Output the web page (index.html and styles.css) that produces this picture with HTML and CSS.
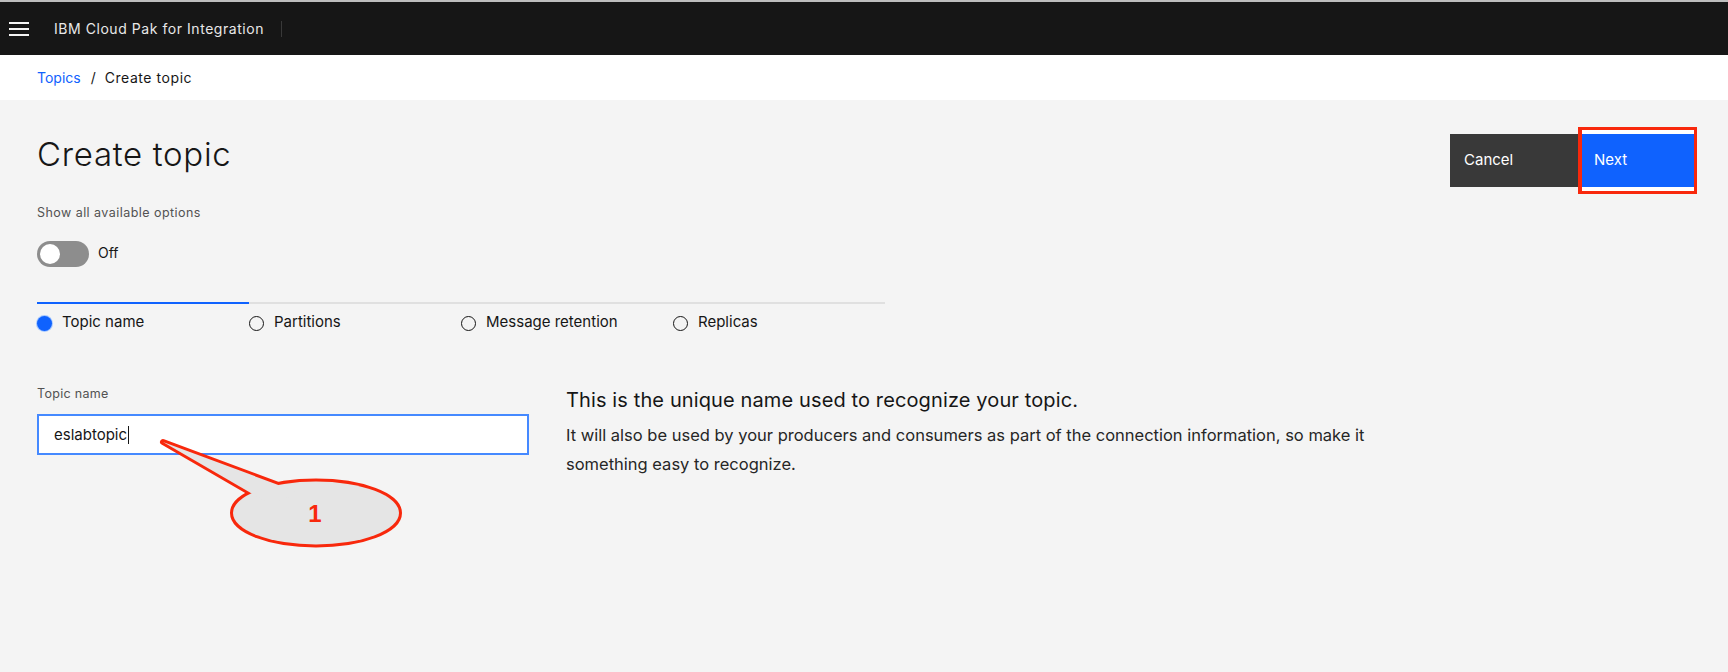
FILE: index.html
```html
<!DOCTYPE html>
<html lang="en">
<head>
<meta charset="utf-8">
<title>Create topic</title>
<link rel="stylesheet" href="styles.css">
</head>
<body>
<header class="shell">
  <span class="menu" aria-label="Menu">
    <svg width="20" height="14" viewBox="0 0 20 14"><rect x="0" y="0" width="20" height="2" fill="#f4f4f4"/><rect x="0" y="6" width="20" height="2" fill="#f4f4f4"/><rect x="0" y="12" width="20" height="2" fill="#f4f4f4"/></svg>
  </span>
  <span class="product">IBM Cloud Pak for Integration</span>
  <span class="divider"></span>
</header>
<nav class="crumbs">
  <a class="crumb-link" href="#">Topics</a>
  <span class="sep">/</span>
  <span class="crumb-current">Create topic</span>
</nav>
<main class="page">
  <div class="page-head">
    <div class="head-left">
      <h1 class="title">Create topic</h1>
      <div class="toggle-label">Show all available options</div>
      <div class="toggle">
        <span class="track"><span class="knob"></span></span>
        <span class="toggle-text">Off</span>
      </div>
    </div>
    <div class="actions">
      <button class="btn secondary">Cancel</button>
      <span class="annot"><button class="btn primary">Next</button></span>
    </div>
  </div>
  <ol class="progress">
    <li class="step current"><span class="radio"></span><span class="step-label">Topic name</span></li>
    <li class="step"><span class="radio"></span><span class="step-label">Partitions</span></li>
    <li class="step"><span class="radio"></span><span class="step-label">Message retention</span></li>
    <li class="step"><span class="radio"></span><span class="step-label">Replicas</span></li>
  </ol>
  <div class="form-row">
    <div class="field">
      <label class="field-label">Topic name</label>
      <div class="input">eslabtopic<span class="caret"></span></div>
    </div>
    <div class="help">
      <h2 class="help-title">This is the unique name used to recognize your topic.</h2>
      <p class="help-text">It will also be used by your producers and consumers as part of the connection information, so make it something easy to recognize.</p>
    </div>
  </div>
</main>
<svg class="callout" width="1728" height="672" viewBox="0 0 1728 672">
  <g fill="none" stroke="#f8280c" stroke-width="6" stroke-linejoin="round">
    <ellipse cx="316" cy="513" rx="83" ry="31.5"/>
    <polygon points="163,442 300,493 270,504"/>
  </g>
  <g fill="#e5e5e5">
    <ellipse cx="316" cy="513" rx="83" ry="31.5"/>
    <polygon points="163,442 300,493 270,504"/>
  </g>
  <text x="315" y="522" text-anchor="middle" class="callout-num">1</text>
</svg>
</body>
</html>
```
FILE: styles.css
```css
* { box-sizing: border-box; }
html, body { margin: 0; padding: 0; }
body {
  position: relative;
  width: 1728px;
  height: 672px;
  overflow: hidden;
  background: #f4f4f4;
  font-family: Inter, Roboto, "Liberation Sans", sans-serif;
  color: #161616;
}
.shell {
  height: 55px;
  border-top: 2px solid #bdbdbd;
  background: #161616;
  display: flex;
  align-items: center;
}
.menu {
  display: flex;
  width: 54px;
  padding-left: 9px;
}
.menu svg { display: block; }
.product {
  color: #e8e8e8;
  font-size: 14px;
  letter-spacing: 0.55px;
}
.divider {
  width: 1px;
  height: 16px;
  background: #393939;
  margin-left: 17px;
}
.crumbs {
  height: 45px;
  background: #ffffff;
  display: flex;
  align-items: center;
  padding-left: 37px;
  font-size: 14px;
}
.crumb-link { color: #0f62fe; text-decoration: none; }
.sep { margin: 0 9px 0 10px; color: #161616; }
.crumb-current { color: #161616; letter-spacing: 0.55px; }
.page {
  padding: 34px 31px 0 37px;
}
.page-head {
  display: flex;
  justify-content: space-between;
  align-items: flex-start;
}
.title {
  margin: 0;
  font-size: 33px;
  line-height: 40px;
  font-weight: 300;
  letter-spacing: 0.7px;
  color: #161616;
}
.toggle-label {
  margin-top: 30px;
  font-size: 12.5px;
  line-height: 18px;
  letter-spacing: 0.45px;
  color: #525252;
}
.toggle {
  margin-top: 19px;
  display: flex;
  align-items: center;
  gap: 9px;
}
.track {
  width: 52px;
  height: 26px;
  border-radius: 13px;
  background: #8d8d8d;
  display: flex;
  align-items: center;
  padding-left: 3px;
}
.knob {
  width: 20px;
  height: 20px;
  border-radius: 50%;
  background: #ffffff;
}
.toggle-text { font-size: 14px; color: #161616; margin-top: -4px; }
.actions {
  display: flex;
  align-items: flex-start;
  margin-top: 0;
}
.btn {
  border: 0;
  height: 53px;
  font-family: inherit;
  font-size: 15px;
  text-align: left;
  padding: 0 14px;
  color: #ffffff;
  cursor: pointer;
}
.secondary { width: 128px; background: #393939; padding-bottom: 2px; }
.primary { width: 112px; background: #0f62fe; padding-left: 12px; display: block; padding-bottom: 2px; }
.annot {
  display: block;
  margin-top: -7px;
  border: 3px solid #f8280c;
  border-left-width: 4px;
  padding: 4px 0;
  background: #ffffff;
}
.progress {
  list-style: none;
  margin: 35px 0 0 0;
  padding: 0;
  display: flex;
}
.step {
  width: 212px;
  border-top: 2px solid #e0e0e0;
  padding-top: 9px;
  display: flex;
  align-items: center;
  gap: 10px;
  font-size: 15px;
  line-height: 18px;
  color: #161616;
}
.step.current { border-top-color: #0f62fe; }
.radio {
  width: 15px;
  height: 15px;
  border-radius: 50%;
  border: 1px solid #161616;
  flex: none;
  margin-top: 2px;
}
.current .radio {
  border: 0;
  background: #0f62fe;
  box-shadow: 0 0 0 1px #a6c8ff;
}
.form-row {
  margin-top: 55px;
  display: flex;
  gap: 37px;
}
.field { width: 492px; }
.field-label {
  display: block;
  font-size: 12.5px;
  line-height: 16px;
  letter-spacing: 0.3px;
  color: #525252;
}
.input {
  margin-top: 12px;
  height: 41px;
  background: #ffffff;
  border: 2px solid #4589ff;
  display: flex;
  align-items: center;
  padding-left: 15px;
  font-size: 15px;
  color: #161616;
}
.caret {
  width: 1px;
  height: 18px;
  background: #161616;
  margin-left: 1px;
}
.help { width: 820px; }
.help-title {
  margin: 0;
  font-size: 20px;
  line-height: 28px;
  font-weight: 400;
  letter-spacing: 0.12px;
  color: #161616;
}
.help-text {
  margin: 7px 0 0 0;
  font-size: 16.5px;
  line-height: 29px;
  color: #262626;
}
.callout {
  position: absolute;
  top: 0;
  left: 0;
  pointer-events: none;
}
.callout-num {
  font-family: "Liberation Sans", Arial, sans-serif;
  font-weight: 700;
  font-size: 24px;
  fill: #f8280c;
}
```
